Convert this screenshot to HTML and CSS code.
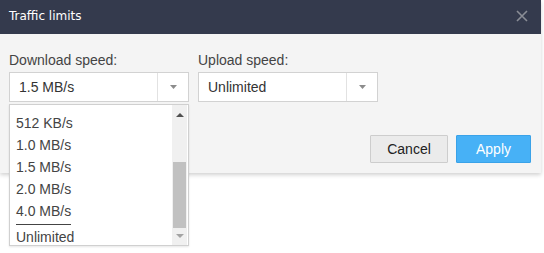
FILE: index.html
```html
<!DOCTYPE html>
<html>
<head>
<meta charset="utf-8">
<link rel="stylesheet" href="styles.css">
</head>
<body>
<div class="dialog">
  <div class="header">
    <span class="title">Traffic limits</span>
    <span class="close">
      <svg width="12" height="12" viewBox="0 0 12 12"><path d="M1 1L11 11M11 1L1 11" stroke="#8a8d96" stroke-width="1.6"/></svg>
    </span>
  </div>
  <div class="body">
    <div class="fields">
      <div class="field">
        <div class="label">Download speed:</div>
        <div class="select">
          <span class="value">1.5 MB/s</span>
          <span class="arrow"><svg width="7" height="4" viewBox="0 0 7 4"><path d="M0 0H7L3.5 4Z" fill="#8c8c8c"/></svg></span>
        </div>
        <div class="menu">
          <ul class="options">
            <li>512 KB/s</li>
            <li>1.0 MB/s</li>
            <li>1.5 MB/s</li>
            <li>2.0 MB/s</li>
            <li>4.0 MB/s</li>
            <li class="sep"></li>
            <li>Unlimited</li>
          </ul>
          <div class="scrollbar">
            <svg class="up" width="8" height="4" viewBox="0 0 8 4"><path d="M0 4H8L4 0Z" fill="#505050"/></svg>
            <div class="track"><div class="thumb"></div></div>
            <svg class="down" width="8" height="4" viewBox="0 0 8 4"><path d="M0 0H8L4 4Z" fill="#a3a3a3"/></svg>
          </div>
        </div>
      </div>
      <div class="field">
        <div class="label">Upload speed:</div>
        <div class="select">
          <span class="value">Unlimited</span>
          <span class="arrow"><svg width="7" height="4" viewBox="0 0 7 4"><path d="M0 0H7L3.5 4Z" fill="#8c8c8c"/></svg></span>
        </div>
      </div>
    </div>
    <div class="buttons">
      <button class="btn cancel">Cancel</button>
      <button class="btn apply">Apply</button>
    </div>
  </div>
</div>
</body>
</html>
```
FILE: styles.css
```css
html, body {
  margin: 0;
  padding: 0;
  background: #ffffff;
  font-family: "Liberation Sans", Arial, sans-serif;
}
body {
  min-height: 253px;
}
.dialog {
  width: 541px;
  background: #f4f4f4;
  box-shadow: 0 2px 4px rgba(0,0,0,0.18);
}
.header {
  height: 34px;
  background: #343a4d;
  display: flex;
  align-items: center;
  justify-content: space-between;
  padding: 0 13px 0 9px;
}
.title {
  color: #ffffff;
  font-family: "DejaVu Sans", sans-serif;
  font-size: 12px;
  position: relative;
  top: -1px;
}
.close {
  display: flex;
  position: relative;
  top: -1px;
}
.body {
  padding: 18px 10px 10px 9px;
}
.fields {
  display: flex;
  gap: 9px;
}
.field {
  position: relative;
  width: 180px;
}
.label {
  color: #444;
  font-size: 14px;
  height: 20px;
  line-height: 17px;
}
.select {
  box-sizing: border-box;
  height: 30px;
  background: #fff;
  border: 1px solid #d2d2d2;
  display: flex;
  align-items: center;
}
.value {
  flex: 1;
  padding-left: 9px;
  font-size: 14px;
  color: #333;
}
.arrow {
  width: 30px;
  height: 100%;
  border-left: 1px solid #e2e2e2;
  display: flex;
  align-items: center;
  justify-content: center;
}
.menu {
  position: absolute;
  left: 0;
  top: 52px;
  width: 180px;
  height: 142px;
  box-sizing: border-box;
  background: #fff;
  border: 1px solid #d0d0d0;
  display: flex;
  box-shadow: 0 1px 2px rgba(0,0,0,0.1);
  z-index: 2;
}
.options {
  list-style: none;
  margin: 0;
  padding: 7px 0 0 6px;
  flex: 1;
}
.options li {
  font-size: 14px;
  color: #444;
  height: 22px;
  line-height: 22px;
}
.options .sep {
  height: 0;
  line-height: 0;
  width: 55px;
  border-top: 1px solid #444;
  margin: 2px 0 1px 0;
}
.scrollbar {
  width: 15px;
  margin-right: 1px;
  background: #f0f0f0;
  display: flex;
  flex-direction: column;
  align-items: center;
}
.scrollbar .up {
  margin-top: 8px;
}
.track {
  flex: 1;
  width: 100%;
  display: flex;
  flex-direction: column;
  justify-content: flex-end;
  padding-bottom: 6px;
}
.thumb {
  height: 66px;
  margin: 0 1px;
  background: #c1c1c1;
}
.scrollbar .down {
  margin-bottom: 7px;
}
.buttons {
  display: flex;
  justify-content: flex-end;
  gap: 8px;
  margin-top: 33px;
}
.btn {
  height: 28px;
  box-sizing: border-box;
  font-family: "Liberation Sans", Arial, sans-serif;
  font-size: 14px;
  padding: 0;
  border-radius: 1px;
}
.cancel {
  width: 78px;
  background: #ebebeb;
  border: 1px solid #cdcdcd;
  color: #222;
}
.apply {
  width: 75px;
  background: #47b1f6;
  border: 1px solid #3aa2e8;
  color: #fff;
}
```
